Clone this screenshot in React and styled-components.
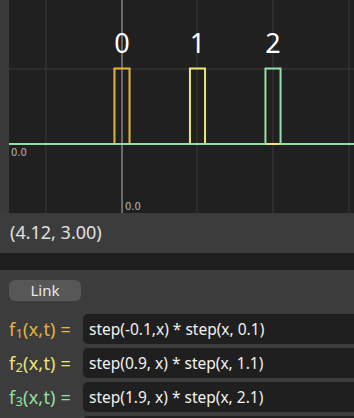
import styled, { createGlobalStyle } from "styled-components"

const GlobalStyle = createGlobalStyle`
  html, body {
    margin: 0;
    padding: 0;
    background: #1e1e1e;
  }
  body {
    font-family: "Noto Sans", "DejaVu Sans", sans-serif;
  }
`

const UNIT = 75.5
const ORIGIN_X = 113
const ORIGIN_Y = 144

const funcs = [
  { n: 1, color: "#e6b43c", expr: "step(-0.1,x) * step(x, 0.1)", from: -0.1, to: 0.1 },
  { n: 2, color: "#ece57a", expr: "step(0.9, x) * step(x, 1.1)", from: 0.9, to: 1.1 },
  { n: 3, color: "#93e0a4", expr: "step(1.9, x) * step(x, 2.1)", from: 1.9, to: 2.1 },
]

const px = (u) => ORIGIN_X + u * UNIT

const pulsePoints = (f) => {
  const a = px(f.from)
  const b = px(f.to)
  const top = ORIGIN_Y - UNIT
  return `0,${ORIGIN_Y} ${a},${ORIGIN_Y} ${a},${top} ${b},${top} ${b},${ORIGIN_Y} 345,${ORIGIN_Y}`
}

const Plot = () => (
  <svg width="345" height="213" viewBox="0 0 345 213">
    <rect width="345" height="213" fill="#202020" />
    {[37, 188, 264, 340].map((x) => (
      <line key={x} x1={x} y1="0" x2={x} y2="213" stroke="#3a3a3a" strokeWidth="1" />
    ))}
    <line x1="0" y1="69" x2="345" y2="69" stroke="#3a3a3a" strokeWidth="1" />
    <line x1={ORIGIN_X} y1="0" x2={ORIGIN_X} y2="213" stroke="#6a6a6a" strokeWidth="2" />
    {funcs.map((f) => (
      <polyline key={f.n} points={pulsePoints(f)} fill="none" stroke={f.color} strokeWidth="2" />
    ))}
    {[0, 1, 2].map((k) => (
      <text
        key={k}
        x={px(k)}
        y="53"
        fill="#ffffff"
        fontSize="27"
        textAnchor="middle"
        fontFamily="'Noto Sans', sans-serif"
      >
        {k}
      </text>
    ))}
    <text x="2" y="156" fill="#b8b8b8" fontSize="10" fontFamily="'DejaVu Sans', sans-serif">0.0</text>
    <text x="116" y="210" fill="#b8b8b8" fontSize="10" fontFamily="'DejaVu Sans', sans-serif">0.0</text>
  </svg>
)

const App = () => {
  return (
    <Wrapper>
      <GlobalStyle />
      <PlotRow>
        <Gutter />
        <Plot />
      </PlotRow>
      <CoordBar>(4.12, 3.00)</CoordBar>
      <Spacer />
      <Controls>
        <LinkButton>Link</LinkButton>
        <Rows>
          {funcs.map((f) => (
            <Row key={f.n}>
              <Label $color={f.color}>
                f<sub>{f.n}</sub>(x,t) =
              </Label>
              <ExprBox>{f.expr}</ExprBox>
            </Row>
          ))}
          <Row>
            <Label $color="#7ec8e0" />
            <ExprBox />
          </Row>
        </Rows>
      </Controls>
    </Wrapper>
  )
}

export default App

const Wrapper = styled.main`
  width: 354px;
  height: 418px;
  overflow: hidden;
  background: #1e1e1e;
  display: flex;
  flex-direction: column;
  & > * {
    flex-shrink: 0;
  }
`

const PlotRow = styled.div`
  display: flex;
  height: 213px;
  svg {
    display: block;
  }
`

const Gutter = styled.div`
  width: 9px;
  background: #3a3a3a;
`

const CoordBar = styled.div`
  height: 40px;
  background: #3c3c3c;
  color: #e0e0e0;
  font-size: 18px;
  display: flex;
  align-items: center;
  padding-left: 10px;
  padding-bottom: 2px;
  box-sizing: border-box;
`

const Spacer = styled.div`
  height: 17px;
  background: #1e1e1e;
`

const Controls = styled.section`
  flex: 1;
  background: #3c3c3c;
  padding: 9px 0 0 9px;
`

const LinkButton = styled.button`
  width: 72px;
  height: 21px;
  border: none;
  border-radius: 6px;
  background: #575757;
  color: #e8e8e8;
  font-family: "Noto Sans", sans-serif;
  font-size: 15px;
  padding: 0;
  line-height: 21px;
`

const Rows = styled.div`
  margin-top: 13px;
  display: grid;
  gap: 4px;
`

const Row = styled.div`
  display: flex;
  align-items: center;
  height: 30px;
`

const Label = styled.div`
  width: 74px;
  flex-shrink: 0;
  color: ${(p) => p.$color};
  font-size: 18px;
  letter-spacing: 0.2px;
  white-space: nowrap;
  sub {
    font-size: 13px;
    vertical-align: -2px;
    line-height: 0;
  }
`

const ExprBox = styled.div`
  flex: 1;
  height: 30px;
  background: #1f1f1f;
  border-radius: 5px 0 0 5px;
  color: #f2f2f2;
  font-size: 15.5px;
  line-height: 30px;
  padding-left: 6px;
  white-space: nowrap;
`
